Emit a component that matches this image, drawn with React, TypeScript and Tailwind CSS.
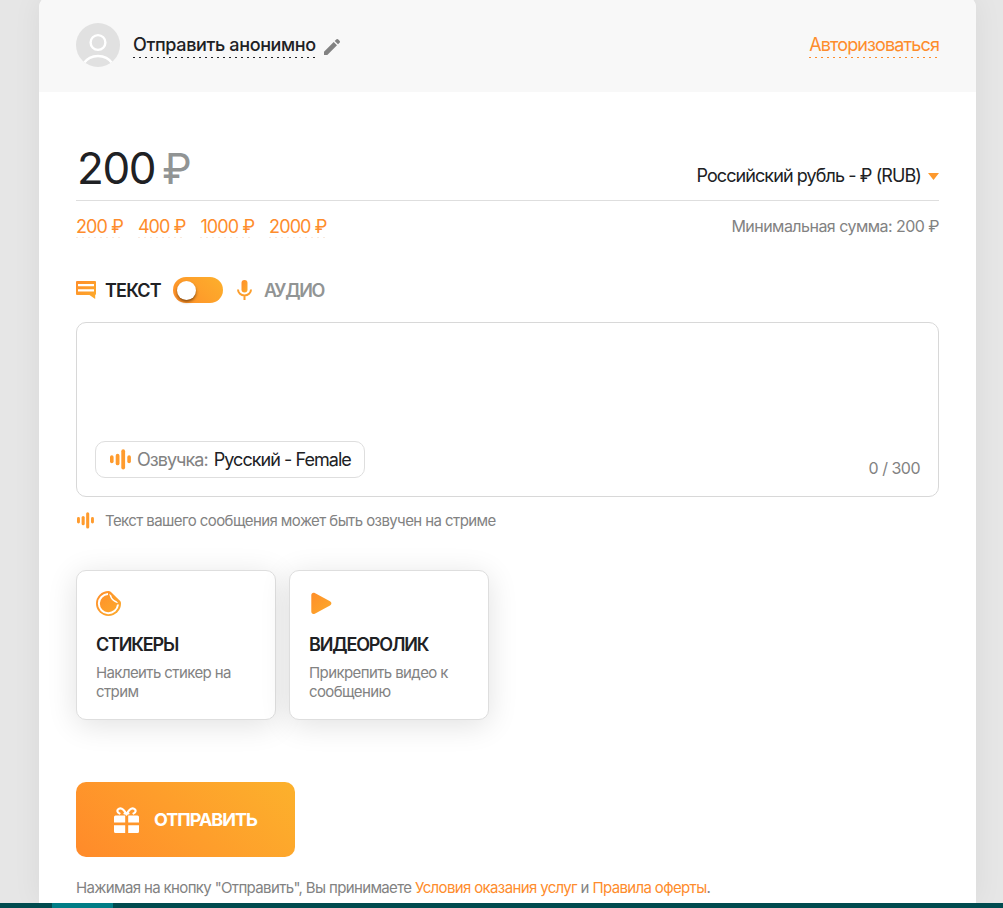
import { useState } from "react";

const presets = [200, 400, 1000, 2000];

const attachments = [
  {
    id: "stickers",
    title: "СТИКЕРЫ",
    description: "Наклеить стикер на стрим",
    icon: <StickerIcon />,
  },
  {
    id: "video",
    title: "ВИДЕОРОЛИК",
    description: "Прикрепить видео к сообщению",
    icon: <PlayIcon />,
  },
];

// Shared gradient for all orange icons
function OrangeGradient() {
  return (
    <svg width="0" height="0" className="absolute">
      <defs>
        <linearGradient id="orange" x1="0" y1="0" x2="1" y2="1">
          <stop offset="0" stopColor="#ff8e29" />
          <stop offset="1" stopColor="#fcab2c" />
        </linearGradient>
      </defs>
    </svg>
  );
}

function AvatarIcon() {
  return (
    <svg width="44" height="44" viewBox="0 0 44 44" fill="none">
      <clipPath id="avatar">
        <circle cx="22" cy="22" r="22" />
      </clipPath>
      <circle cx="22" cy="22" r="22" fill="#e1e1e1" />
      <g clipPath="url(#avatar)" stroke="#fff" strokeWidth="2.4">
        <circle cx="22" cy="19.5" r="7.4" />
        <path d="M7.5 40.5C11 35.5 16 33 22 33s11 2.500 14.500 7.500" />
      </g>
    </svg>
  );
}

function PencilIcon() {
  return (
    <svg width="16" height="16" viewBox="0 0 16 16" fill="#828282">
      <path d="M0 12.700 9.700 3l3.300 3.300L3.300 16H0zM10.700 2 12.200.5a1.500 1.500 0 0 1 2.100 0l1.200 1.200a1.500 1.500 0 0 1 0 2.100L14 5.300z" />
    </svg>
  );
}

function MessageIcon() {
  return (
    <svg width="20" height="18" viewBox="0 0 20 18">
      <path
        fill="url(#orange)"
        fillRule="evenodd"
        d="M1 0h18a1 1 0 0 1 1 1v12a1 1 0 0 1-.8 1V18L13.500 14H1a1 1 0 0 1-1-1V1a1 1 0 0 1 1-1zm1 3v2.200h16V3zm0 5.200v2.200h16V8.200z"
      />
    </svg>
  );
}

function MicIcon() {
  return (
    <svg width="15" height="20" viewBox="0 0 15 20">
      <rect x="4.500" y="0" width="6" height="12.500" rx="3" fill="url(#orange)" />
      <path
        d="M1 9.500a6.500 6 0 0 0 13 0M7.500 15.500V20"
        fill="none"
        stroke="#fc9e2c"
        strokeWidth="2"
      />
    </svg>
  );
}

function VoiceIcon({ size }: { size: number }) {
  return (
    <svg width={size} height={size} viewBox="0 0 21 21" fill="#ff9b2d">
      <rect x="0" y="6.300" width="3.600" height="8" rx="1.800" />
      <rect x="5.700" y="4.800" width="3.800" height="11.500" rx="1.900" />
      <rect x="11.300" y="0.300" width="3.800" height="20.200" rx="1.900" />
      <rect x="17.300" y="6.300" width="3.600" height="8" rx="1.800" />
    </svg>
  );
}

function StickerIcon() {
  return (
    <svg width="25" height="25" viewBox="0 0 25 25">
      <path
        d="M12.500 0c.9 0 1.500.2 2.200.8l9.500 9.300c.6.700.8 1.400.8 2.400A12.500 12.500 0 1 1 12.500 0z"
        fill="url(#orange)"
      />
      <path
        d="M12 3a9.600 9.600 0 1 0 10 10.500"
        fill="none"
        stroke="#fff"
        strokeWidth="2"
      />
      <path d="M13.300 2.700c.7 4.900 3.800 8.500 8.900 9.500L20.600 10.200C17.800 9.300 15.900 7.300 15.300 4.600z" fill="#fff" />
    </svg>
  );
}

function PlayIcon() {
  return (
    <svg width="25" height="25" viewBox="0 0 25 25">
      <path
        d="M2.300 4.200c0-2 1.700-3.100 3.500-2.200l15.200 8.300c1.900 1 1.900 3.100 0 4.100L5.800 22.700c-1.800.9-3.500 0-3.500-2.100z"
        fill="url(#orange)"
      />
    </svg>
  );
}

function GiftIcon() {
  return (
    <svg width="26" height="26" viewBox="0 0 26 26" fill="#fff">
      <path d="M0 10a1.500 1.500 0 0 1 1.500-1.500h9.700v7H0zM14.200 8.500h9.300A1.500 1.500 0 0 1 25 10v5.500H14.200zM0 18.200h11.200V26H1.500A1.500 1.500 0 0 1 0 24.500zM14.200 18.200H25v6.300a1.500 1.500 0 0 1-1.500 1.500h-9.300z" />
      <path
        d="M12.500 7.500C10.500 3.500 7.500.8 5 1.700 2.600 2.600 3 5.600 5.500 6.500M12.500 7.500c2-4 5-6.700 7.500-5.800 2.400.9 2 3.900-.5 4.800M10.500 6.500h4"
        fill="none"
        stroke="#fff"
        strokeWidth="2.200"
        strokeLinecap="round"
      />
    </svg>
  );
}

// Fine dots under text links
function DottedLine({ className }: { className: string }) {
  return (
    <span
      className={`block h-px w-full bg-[repeating-linear-gradient(90deg,currentColor_0_2px,transparent_2px_6px)] ${className}`}
    />
  );
}

export default function App() {
  const [amount, setAmount] = useState(200);
  const [isAudio, setIsAudio] = useState(false);

  return (
    <div className="flex h-[908px] flex-col overflow-hidden bg-[#e6e6e6] font-['Inter',sans-serif] whitespace-nowrap text-[#202124]">
      <OrangeGradient />
      <main className="-mt-[3px] ml-[39px] h-[906px] w-[937px] shrink-0 overflow-hidden rounded-t-[10px] bg-white shadow-[0_0_30px_rgba(0,0,0,0.06)]">
        <header className="flex h-[95px] items-center justify-between bg-[#f8f8f8] px-[37px]">
          <div className="flex items-center">
            <AvatarIcon />
            <button className="mt-[1px] ml-[13px] text-[18px] leading-6 font-medium tracking-[-0.36px]">
              Отправить анонимно
              <DottedLine className="text-[#202124]" />
            </button>
            <span className="mt-[4px] ml-2">
              <PencilIcon />
            </span>
          </div>
          <button className="mt-[1px] text-[18px] leading-6 tracking-[-0.88px] text-[#fe8c2c]">
            Авторизоваться
            <DottedLine className="text-[#fe8c2c]" />
          </button>
        </header>

        <div className="px-[37px] pt-[45px]">
          <div className="flex h-[64px] items-center justify-between border-b border-[#dedede]">
            <div className="-mt-px pl-[1px] text-[44px] leading-[60px]">
              <span className="tracking-[-1.4px]">{amount}</span>
              <span className="ml-[7px] text-[42px] text-[#919494]">₽</span>
            </div>
            <button className="mt-[14px] flex items-center text-[18px] leading-6 tracking-[-0.91px]">
              Российский рубль - ₽ (RUB)
              <svg width="11" height="7" viewBox="0 0 11 7" className="mt-px ml-[7px]">
                <path d="M0 0h11L5.500 7z" fill="#fd992d" />
              </svg>
            </button>
          </div>

          <div className="flex h-[51px] items-center justify-between">
            <div className="flex gap-[15px] text-[18px] leading-[21px] tracking-[-0.9px] text-[#fe8c2c]">
              {presets.map((value) => (
                <button key={value} onClick={() => setAmount(value)}>
                  {value} ₽
                  <DottedLine className="text-[#f8eadf]" />
                </button>
              ))}
            </div>
            <span className="-mt-px text-[16px] tracking-[-0.53px] text-[#828282]">
              Минимальная сумма: 200 ₽
            </span>
          </div>

          <div className="mt-[25px] flex h-[26px] items-center text-[18px] font-semibold">
            <MessageIcon />
            <span className="ml-[9px] tracking-[-0.8px]">ТЕКСТ</span>
            <button
              onClick={() => setIsAudio(!isAudio)}
              className="ml-[12px] flex h-[26px] w-[50px] items-center rounded-full bg-linear-45 from-[#ff8e29] to-[#fcb02c] px-[4px]"
              aria-label="Текст / Аудио"
            >
              <span
                className={`size-[19px] rounded-full bg-white shadow-[0_2px_3px_rgba(80,40,0,0.65)] ${
                  isAudio ? "ml-auto" : ""
                }`}
              />
            </button>
            <span className="ml-[14px]">
              <MicIcon />
            </span>
            <span className="ml-3 tracking-[-1.3px] text-[#919494]">АУДИО</span>
          </div>

          <div className="mt-[19px] flex h-[175px] items-end justify-between rounded-[10px] border border-[#d8d8d8] px-[18px] pb-[18px]">
            <button className="flex h-[37px] w-[270px] items-center rounded-[10px] border border-[#dedede] pl-[14px] text-[18px] tracking-[-0.95px]">
              <VoiceIcon size={21} />
              <span className="ml-[6px] text-[#828282]">Озвучка:</span>
              <span className="ml-[6px]">Русский - Female</span>
            </button>
            <span className="text-[16px] leading-5 tracking-[-0.5px] text-[#828282]">0 / 300</span>
          </div>

          <div className="mt-[15px] flex h-[18px] items-center text-[15px] tracking-[-0.58px] text-[#828282]">
            <span className="-mt-px ml-px">
              <VoiceIcon size={17} />
            </span>
            <span className="ml-[11px]">
              Текст вашего сообщения может быть озвучен на стриме
            </span>
          </div>

          <div className="mt-[40px] flex gap-[13px]">
            {attachments.map((item) => (
              <button
                key={item.id}
                className="flex h-[150px] w-[200px] flex-col items-start rounded-[10px] border border-[#dedede] bg-white px-[19px] pt-5 text-left shadow-[0_5px_30px_rgba(0,0,0,0.12)]"
              >
                {item.icon}
                <div className="mt-[17px] text-[18px] leading-6 font-semibold tracking-[-1.15px]">
                  {item.title}
                </div>
                <div className="mt-[6px] w-[150px] text-[15px] leading-[19px] tracking-[-0.6px] whitespace-normal text-[#828282]">
                  {item.description}
                </div>
              </button>
            ))}
          </div>

          <button className="mt-[62px] flex h-[75px] w-[219px] items-center rounded-[10px] bg-linear-45 from-[#ff8a2a] to-[#fcb12c] pl-[38px] text-[18px] font-bold tracking-[-1px] text-white">
            <GiftIcon />
            <span className="ml-[14px]">ОТПРАВИТЬ</span>
          </button>

          <p className="mt-[21px] text-[15px] leading-5 tracking-[-0.64px] text-[#828282]">
            Нажимая на кнопку "Отправить", Вы принимаете{" "}
            <a className="text-[#fe8c2c]">Условия оказания услуг</a> и{" "}
            <a className="text-[#fe8c2c]">Правила оферты</a>.
          </p>
        </div>
      </main>
      <footer className="relative h-[5px] shrink-0 bg-[#004b4f] pl-[52px]">
        <div className="h-full w-[61px] bg-[#007d86]" />
      </footer>
    </div>
  );
}
